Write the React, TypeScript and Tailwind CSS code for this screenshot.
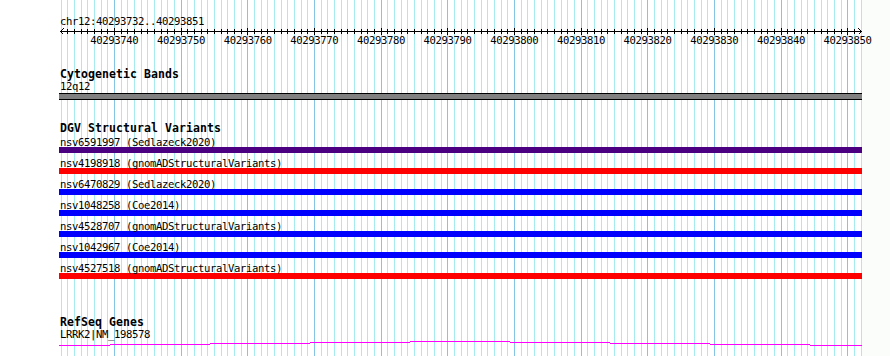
import React from 'react';

// GBrowse-style track panel: ruler, cytoband, DGV variants, RefSeq gene

const GRID_XS = Array.from({ length: 121 }, (_, k) => ({
  x: Math.floor(61 + (k * 20) / 3),
  major: (k - 8) % 10 === 0,
}));

const TICK_LABELS = Array.from({ length: 12 }, (_, j) => String(40293740 + j * 10));

const VARIANTS = [
  { name: 'nsv6591997 (Sedlazeck2020)', color: 'bg-[#4b0082]' },
  { name: 'nsv4198918 (gnomADStructuralVariants)', color: 'bg-[#ff0000]' },
  { name: 'nsv6470829 (Sedlazeck2020)', color: 'bg-[#0000ff]' },
  { name: 'nsv1048258 (Coe2014)', color: 'bg-[#0000ff]' },
  { name: 'nsv4528707 (gnomADStructuralVariants)', color: 'bg-[#0000ff]' },
  { name: 'nsv1042967 (Coe2014)', color: 'bg-[#0000ff]' },
  { name: 'nsv4527518 (gnomADStructuralVariants)', color: 'bg-[#ff0000]' },
];

// intron "hat" drawn as stepped 1px segments
const HAT = [
  [59, 110, 6],
  [110, 210, 5],
  [210, 310, 4],
  [310, 410, 3],
  [410, 510, 2],
  [510, 610, 3],
  [610, 710, 4],
  [710, 810, 5],
  [810, 862, 6],
];

function Label({ children }: { children: React.ReactNode }) {
  return (
    <div className="ml-[60px] h-[10px] whitespace-pre font-['DejaVu_Sans_Mono',monospace] text-[10.6px] leading-[10px] tracking-[-0.38px] text-black">
      {children}
    </div>
  );
}

function Title({ children }: { children: React.ReactNode }) {
  return (
    <div className="ml-[60px] h-[10px] whitespace-pre font-['DejaVu_Sans_Mono',monospace] text-[11.5px] font-bold leading-[10px] tracking-[0.08px] text-black">
      {children}
    </div>
  );
}

function Grid() {
  return (
    <svg
      className="absolute left-0 top-0"
      width={862}
      height={356}
      shapeRendering="crispEdges"
    >
      {GRID_XS.map(({ x, major }) => (
        <rect key={x} x={x} y={0} width={1} height={356} fill={major ? '#86c4e6' : '#a6ecee'} />
      ))}
    </svg>
  );
}

function Axis() {
  return (
    <svg width={862} height={9} className="block" shapeRendering="crispEdges">
      <rect x={60} y={5} width={802} height={1} fill="#000" />
      {GRID_XS.slice(1, 120).map(({ x, major }) => (
        <rect key={x} x={x} y={major ? 2 : 3} width={1} height={major ? 7 : 5} fill="#000" />
      ))}
      <polyline points="63.5,2.5 60.5,5.5 63.5,8.5" fill="none" stroke="#000" strokeWidth={1} />
      <polyline points="858.5,2.5 861.5,5.5 858.5,8.5" fill="none" stroke="#000" strokeWidth={1} />
    </svg>
  );
}

export default function App() {
  return (
    <div className="flex h-[356px] w-[890px] overflow-hidden bg-white">
      <div className="relative h-full w-[862px] shrink-0 bg-white">
        <Grid />
        <div className="relative flex flex-col pt-[16px]">
          {/* ruler */}
          <Label>chr12:40293732..40293851</Label>
          <Axis />
          <div className="ml-[81px] grid h-[10px] grid-cols-[repeat(12,66.667px)] font-['DejaVu_Sans_Mono',monospace] text-[10.6px] leading-[10px] tracking-[-0.38px] text-black">
            {TICK_LABELS.map((t) => (
              <div key={t} className="text-center">
                {t}
              </div>
            ))}
          </div>

          {/* cytogenetic bands */}
          <div className="mt-[24px]">
            <Title>Cytogenetic Bands</Title>
          </div>
          <div className="mt-[2px]">
            <Label>12q12</Label>
          </div>
          <div className="ml-[59px] mt-[2px] h-[7px] w-[803px] border-y border-black bg-[#808080]" />

          {/* DGV */}
          <div className="mt-[23px]">
            <Title>DGV Structural Variants</Title>
          </div>
          <div className="mt-[4px] flex flex-col gap-[5px]">
            {VARIANTS.map((v) => (
              <div key={v.name}>
                <Label>{v.name}</Label>
                <div className={`ml-[59px] h-[6px] w-[803px] ${v.color}`} />
              </div>
            ))}
          </div>

          {/* RefSeq */}
          <div className="mt-[38px]">
            <Title>RefSeq Genes</Title>
          </div>
          <div className="mt-[2px]">
            <Label>LRRK2|NM_198578</Label>
          </div>
          <svg width={862} height={8} className="block" shapeRendering="crispEdges">
            {HAT.map(([a, b, y]) => (
              <rect key={a} x={a} y={y} width={b - a} height={1} fill="#ff00ff" />
            ))}
          </svg>
        </div>
      </div>
      <div className="h-full flex-1 bg-[#fbfdfb]" />
    </div>
  );
}
